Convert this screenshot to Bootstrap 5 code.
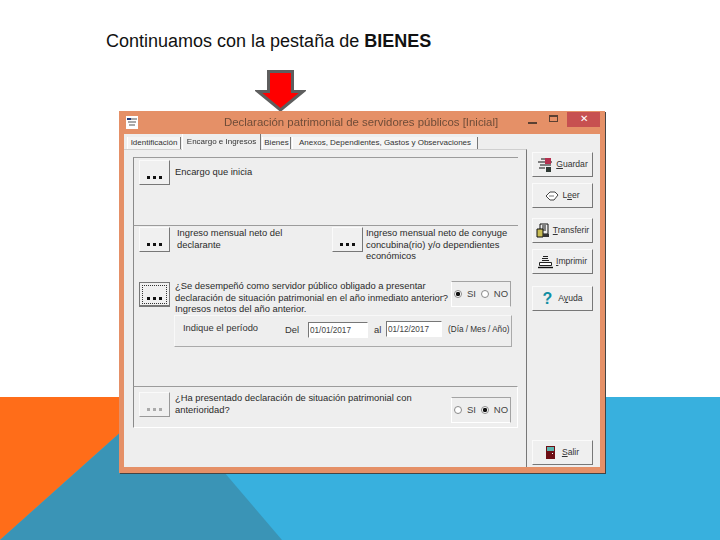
<!DOCTYPE html>
<html lang="es">
<head>
<meta charset="utf-8">
<title>Bienes</title>
<link href="https://cdn.jsdelivr.net/npm/bootstrap@5.3.0/dist/css/bootstrap.min.css" rel="stylesheet">
<style>
html,body{margin:0;background:#fff;}
.stage{position:relative;width:720px;height:540px;overflow:hidden;font-family:"Liberation Sans",Arial,sans-serif;}
.backdrop{position:absolute;left:0;top:397px;width:720px;height:143px;}
.slide-title{position:relative;margin:0;padding:31px 0 0 106px;font-size:18px;line-height:20px;color:#111;height:51px;}
.slide-title b{font-weight:700;}
.down-arrow{position:relative;display:block;margin:19px 0 0 255px;width:51px;height:41px;}
.appwin{position:relative;margin-left:119px;width:486px;height:362px;background:#e59067;box-shadow:1px 1px 0 #444;display:flex;flex-direction:column;padding:0 5px 6px 5px;font-size:10px;color:#222;filter:blur(.35px);}
.titlebar{height:23px;flex:none;display:flex;align-items:flex-start;position:relative;}
.app-ico{width:12px;height:13px;margin:5px 0 0 2px;flex:none;}
.app-title{position:absolute;left:100px;top:3px;font-size:11.4px;line-height:16px;color:#6f4c38;white-space:nowrap;}
.winctl{margin-left:auto;display:flex;align-items:flex-start;}
.ctl-min{width:9px;height:2px;background:#5b4032;margin:11px 12px 0 0;}
.ctl-max{width:9px;height:7px;border:1px solid #5b4032;border-top-width:2px;margin:4px 9px 0 0;}
.ctl-close{width:33px;height:15px;margin-top:1px;background:#c75050;color:#fff;font-size:10px;line-height:14px;text-align:center;}
.client{flex:1;display:flex;background:#eeeeee;min-height:0;}
.tabcol{width:403px;flex:none;display:flex;flex-direction:column;}
.tabstrip{height:15px;flex:none;display:flex;align-items:flex-end;padding-left:3px;gap:1px;font-size:8px;}
.tabitem{height:12px;line-height:11px;text-align:center;background:#f4f4f4;border-left:1px solid #fff;border-right:1px solid #777;color:#333;white-space:nowrap;overflow:hidden;}
.tabitem.sel{height:16px;margin-bottom:-1px;position:relative;background:#eee;line-height:15px;z-index:1;}
.tab-a{width:54px}.tab-b{width:79px}.tab-c{width:29px}.tab-d{width:186px}
.tabpane{flex:1;border-top:1px solid #cfcfcf;border-right:1px solid #777;padding:7px 8px 0 9px;min-height:0;}
.grp{border-top:1px solid #9b9b9b;border-left:1px solid #8a8a8a;padding-left:5px;width:385px;}
.grp-a{height:68px;padding-top:2px;display:flex;gap:5px;}
.grp-b{height:161px;padding-top:1px;}
.grp-c{height:42px;padding-top:5px;border-bottom:1px solid #fff;border-right:1px solid #fff;display:flex;gap:5px;position:relative;}
.dotbtn{width:31px;height:25px;flex:none;padding:0;border-radius:0;background:#f0f0f0;border:1px solid;border-color:#fafafa #777 #777 #fafafa;display:flex;align-items:flex-end;justify-content:center;gap:3px;padding-bottom:5px;}
.dotbtn i{display:block;width:3px;height:3px;background:#111;}
.dotbtn.off i{background:#aaa;}
.dotbtn.off{border-color:#fafafa #999 #999 #fafafa;}
.dotbtn.foc{border:1px solid #777;border-bottom-width:2px;outline:1px dotted #333;outline-offset:-4px;}
.line-txt{line-height:11.5px;font-size:9.4px;color:#2a2a2a;white-space:nowrap;}
.txt-one{padding-top:6px;}
.pair{display:flex;height:55px;}
.pair-l{width:193px;display:flex;gap:7px;}
.pair-r{flex:1;display:flex;gap:3px;}
.ask{display:flex;gap:5px;position:relative;height:33px;}
.ask .line-txt{width:271px;margin-top:-2px;}
.rbox{flex:none;width:60px;height:26px;border:1px solid;border-color:#a3a3a3 #a3a3a3 #fff #fff;display:flex;align-items:center;justify-content:center;gap:5px;font-size:9.5px;color:#444;}
.ask .rbox{margin:-1px 0 0 0;}
.grp-c .rbox{margin:5px 0 0 0;}
.grp-c .line-txt{width:271px;}
.rd{width:8px;height:8px;margin:0;border-radius:50%;appearance:none;border:1px solid #8a8a8a;background:#fff;flex:none;}
.rd:checked{background:radial-gradient(circle,#111 0 2px,#fff 2.3px);}
.period{margin:0 0 0 35px;width:338px;height:32px;border:1px solid;border-color:#f8f8f8 #aaa #aaa #f8f8f8;display:flex;align-items:flex-start;font-size:9.4px;color:#333;}
.pd-lbl{margin:5px 0 0 8px;width:102px;flex:none;}
.pd-del{margin-top:7px;width:23px;flex:none;}
.pd-inp{width:60px;height:16px;margin-top:6px;border:1px solid;border-color:#777 #fff #fff #777;background:#fff;font-size:8.2px;padding:0 1px;color:#444;border-radius:0;font-family:inherit;flex:none;}
.pd-inp.shorter{width:56px;margin-top:5px;}
.pd-al{margin-top:7px;width:18px;padding-left:6px;flex:none;}
.pd-note{margin:8px 0 0 6px;white-space:nowrap;font-size:8.2px;}
.sidecol{flex:1;padding:18px 7px 2px 5px;display:flex;flex-direction:column;}
.cmd{width:61px;height:25px;padding:0;border-radius:0;background:#efefef;border:1px solid;border-color:#fafafa #777 #777 #fafafa;font-size:8.6px;color:#333;display:flex;align-items:center;justify-content:center;gap:3px;flex:none;}
.cmd u{text-decoration:underline;}
.cmd svg{flex:none;}
.gap-s{margin-top:6px}.gap-m{margin-top:10px}.gap-l{margin-top:12px}
.push{margin-top:auto;}
.qmark{font-size:16px;font-weight:700;color:#118ea3;line-height:1;margin-right:3px;}
</style>
</head>
<body>
<div class="stage">
  <svg class="backdrop" viewBox="0 0 720 143">
    <rect width="720" height="143" fill="#38b0de"/>
    <polygon points="0,0 160,0 0,143" fill="#ff6d19"/>
    <polygon points="160,0 282,143 0,143" fill="#3a94b6"/>
  </svg>
  <p class="slide-title">Continuamos con la pestaña de <b>BIENES</b></p>
  <svg class="down-arrow" viewBox="0 0 51 41">
    <polygon points="13.5,1.5 37.5,1.5 37.5,21.5 48,21.5 25.5,40 3,21.5 13.5,21.5" fill="#f00" stroke="#5e5e5e" stroke-width="3"/>
  </svg>
  <div class="appwin">
    <div class="titlebar">
      <svg class="app-ico" viewBox="0 0 12 13"><rect width="12" height="13" fill="#fff"/><path d="M1 3h10M2 6h8M3 9h6" stroke="#555" stroke-width="1.2"/><rect x="1" y="2" width="4" height="2" fill="#223a7a"/></svg>
      <span class="app-title">Declaración patrimonial de servidores públicos [Inicial]</span>
      <div class="winctl">
        <span class="ctl-min"></span><span class="ctl-max"></span><span class="ctl-close">✕</span>
      </div>
    </div>
    <div class="client">
      <div class="tabcol">
        <div class="tabstrip">
          <div class="tabitem tab-a">Identificación</div>
          <div class="tabitem sel tab-b">Encargo e Ingresos</div>
          <div class="tabitem tab-c">Bienes</div>
          <div class="tabitem tab-d">Anexos, Dependientes, Gastos y Observaciones</div>
        </div>
        <div class="tabpane">
          <div class="grp grp-a">
            <button class="btn dotbtn" type="button"><i></i><i></i><i></i></button>
            <div class="line-txt txt-one">Encargo que inicia</div>
          </div>
          <div class="grp grp-b">
            <div class="pair">
              <div class="pair-l">
                <button class="btn dotbtn" type="button"><i></i><i></i><i></i></button>
                <div class="line-txt">Ingreso mensual neto del<br>declarante</div>
              </div>
              <div class="pair-r">
                <button class="btn dotbtn" type="button"><i></i><i></i><i></i></button>
                <div class="line-txt">Ingreso mensual neto de conyuge<br>concubina(rio) y/o dependientes<br>económicos</div>
              </div>
            </div>
            <div class="ask">
              <button class="btn dotbtn foc" type="button"><i></i><i></i><i></i></button>
              <div class="line-txt">¿Se desempeñó como servidor público obligado a presentar<br>declaración de situación patrimonial en el año inmediato anterior?<br>Ingresos netos del año anterior.</div>
              <div class="rbox"><input class="rd" type="radio" name="a" checked> <span>SI</span> <input class="rd" type="radio" name="a"> <span>NO</span></div>
            </div>
            <div class="period">
              <span class="pd-lbl">Indique el período</span>
              <span class="pd-del">Del</span>
              <input class="pd-inp" type="text" value="01/01/2017">
              <span class="pd-al">al</span>
              <input class="pd-inp shorter" type="text" value="01/12/2017">
              <span class="pd-note">(Día / Mes / Año)</span>
            </div>
          </div>
          <div class="grp grp-c">
            <button class="btn dotbtn off" type="button"><i></i><i></i><i></i></button>
            <div class="line-txt">¿Ha presentado declaración de situación patrimonial con<br>anterioridad?</div>
            <div class="rbox"><input class="rd" type="radio" name="b"> <span>SI</span> <input class="rd" type="radio" name="b" checked> <span>NO</span></div>
          </div>
        </div>
      </div>
      <div class="sidecol">
        <button class="btn cmd" type="button">
          <svg width="16" height="15" viewBox="0 0 16 15"><path d="M4 2h4M1 5h14M3 8h11M2 11h6" stroke="#111" stroke-width="1.2"/><rect x="8" y="1" width="6" height="6" fill="#b5304f"/><rect x="9" y="10" width="5" height="5" fill="#2f3a34"/></svg>
          <span><u>G</u>uardar</span>
        </button>
        <button class="btn cmd gap-s" type="button">
          <svg width="14" height="11" viewBox="0 0 14 11"><path d="M1 6 5 2h5l3 3-4 5H5z" fill="#fff" stroke="#444"/><path d="M4 6h5" stroke="#777"/></svg>
          <span>L<u>e</u>er</span>
        </button>
        <button class="btn cmd gap-m" type="button">
          <svg width="14" height="15" viewBox="0 0 14 15"><path d="M4 1h8v10H4z" fill="#eee" stroke="#111"/><path d="M6 3h4M6 5h4M6 7h4" stroke="#111"/><path d="M1 6h6v8H1z" fill="#c9bd55" stroke="#111"/><path d="M7 11h6v3H7z" fill="#333"/></svg>
          <span><u>T</u>ransferir</span>
        </button>
        <button class="btn cmd gap-s" type="button">
          <svg width="15" height="14" viewBox="0 0 15 14"><path d="M5 1.5h5M4 3.5h6M4 5.5h7" stroke="#222"/><path d="M1.5 7.5h12v3h-12z" fill="#fff" stroke="#222"/><path d="M0 12.5h15" stroke="#111" stroke-width="1.4"/></svg>
          <span><u>I</u>mprimir</span>
        </button>
        <button class="btn cmd gap-l" type="button">
          <span class="qmark">?</span>
          <span>A<u>y</u>uda</span>
        </button>
        <button class="btn cmd push" type="button">
          <svg width="9" height="13" viewBox="0 0 9 13"><rect width="9" height="13" fill="#6d0e14"/><rect x="1" y="1" width="7" height="4" fill="#5cb6b0"/><rect x="6" y="7" width="1" height="1" fill="#fff"/></svg>
          <span class="ms-1"><u>S</u>alir</span>
        </button>
      </div>
    </div>
  </div>
</div>
<script src="https://cdn.jsdelivr.net/npm/bootstrap@5.3.0/dist/js/bootstrap.bundle.min.js"></script>
</body>
</html>
